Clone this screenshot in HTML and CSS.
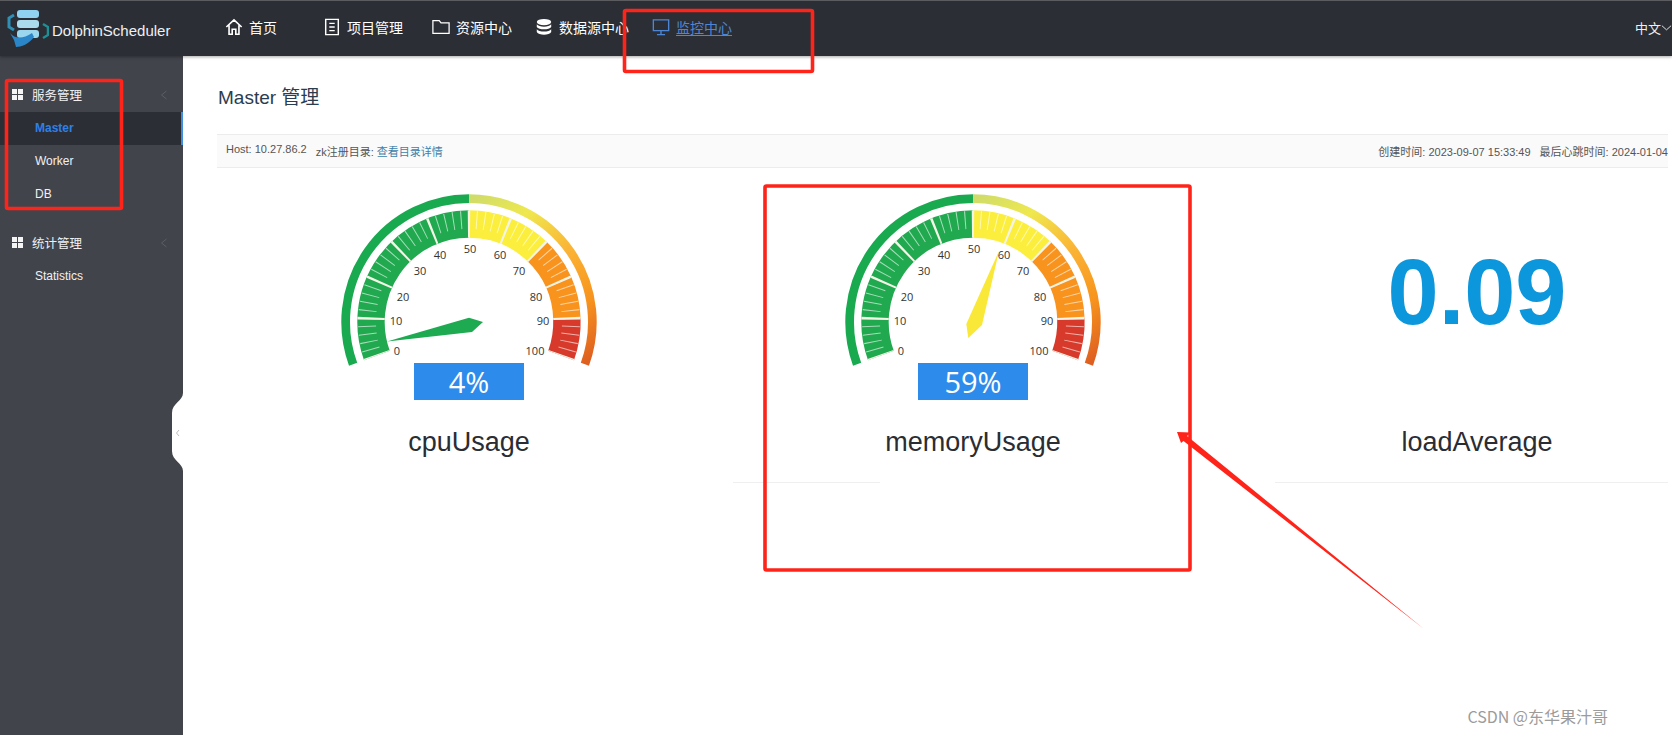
FILE: index.html
```html
<!DOCTYPE html>
<html lang="zh">
<head>
<meta charset="utf-8">
<title>DolphinScheduler</title>
<link rel="stylesheet" href="styles.css">
</head>
<body>
<div class="page">
  <header class="topbar">
    <div class="brand">
      <svg class="logo" viewBox="0 0 42 40" aria-hidden="true">
        <path d="M7 6 L2 9 V18 L7 21" fill="none" stroke="#2f8fb5" stroke-width="3"/>
        <path d="M36 15 L41 18 V26 L36 29" fill="none" stroke="#1f8f96" stroke-width="2.5"/>
        <rect x="10" y="1" width="22" height="8" rx="3" fill="#8fd3f0"/>
        <rect x="10" y="11" width="22" height="8" rx="3" fill="#a9dcec"/>
        <rect x="10" y="21" width="22" height="8" rx="3" fill="#9ad6ee"/>
        <path d="M3 24 C8 30 16 30 25 24 L27 28 C22 35 14 38 9 38 L7 31 Z" fill="#2b86c9"/>
      </svg>
      <span class="brand-name">DolphinScheduler</span>
    </div>
    <nav class="nav">
      <a class="nav-item">
        <svg class="nav-icon" viewBox="0 0 20 20" aria-hidden="true"><path d="M1.5 10 L10 2 L18.5 10 M4.5 8 V18 H8 V12.5 H12 V18 H15.5 V8" fill="none" stroke="currentColor" stroke-width="1.8"/></svg>
        <span>首页</span>
      </a>
      <a class="nav-item">
        <svg class="nav-icon" viewBox="0 0 20 20" aria-hidden="true"><path d="M3 1.5 H17 V18.5 H3 Z M7 6 H13 M7 10 H13 M7 14 H13" fill="none" stroke="currentColor" stroke-width="1.6"/></svg>
        <span>项目管理</span>
      </a>
      <a class="nav-item">
        <svg class="nav-icon" viewBox="0 0 20 20" aria-hidden="true"><path d="M1 3 H8 L10 5.5 H19 V17 H1 Z" fill="none" stroke="currentColor" stroke-width="1.4"/></svg>
        <span>资源中心</span>
      </a>
      <a class="nav-item">
        <svg class="nav-icon" viewBox="0 0 20 20" aria-hidden="true"><ellipse cx="10" cy="4.5" rx="8" ry="3.5" fill="currentColor"/><path d="M2 7 C4 10.5 16 10.5 18 7 V10 C16 13.5 4 13.5 2 10 Z" fill="currentColor"/><path d="M2 12.5 C4 16 16 16 18 12.5 V15.5 C16 19.5 4 19.5 2 15.5 Z" fill="currentColor"/></svg>
        <span>数据源中心</span>
      </a>
      <a class="nav-item nav-item-active">
        <svg class="nav-icon" viewBox="0 0 20 20" aria-hidden="true"><path d="M1.5 2 H18.5 V14 H1.5 Z M10 14 V18 M5.5 18.5 H14.5" fill="none" stroke="currentColor" stroke-width="1.5"/></svg>
        <span class="nav-link">监控中心</span>
      </a>
    </nav>
    <div class="lang">
      <span>中文</span>
      <svg class="lang-arrow" viewBox="0 0 12 8" aria-hidden="true"><path d="M1 1.5 L6 6 L11 1.5" fill="none" stroke="currentColor" stroke-width="1"/></svg>
    </div>
  </header>

  <div class="shell">
    <aside class="sidebar">
      <div class="side-group">
        <div class="side-head">
          <span class="grid-icon"><i></i><i></i><i></i><i></i></span>
          <span class="side-title">服务管理</span>
          <svg class="side-arrow" viewBox="0 0 8 10" aria-hidden="true"><path d="M6.5 1 L1.5 5 L6.5 9" fill="none" stroke="currentColor"/></svg>
        </div>
        <div class="side-item side-item-active">Master</div>
        <div class="side-item">Worker</div>
        <div class="side-item">DB</div>
      </div>
      <div class="side-group">
        <div class="side-head">
          <span class="grid-icon"><i></i><i></i><i></i><i></i></span>
          <span class="side-title">统计管理</span>
          <svg class="side-arrow" viewBox="0 0 8 10" aria-hidden="true"><path d="M6.5 1 L1.5 5 L6.5 9" fill="none" stroke="currentColor"/></svg>
        </div>
        <div class="side-item">Statistics</div>
      </div>
    </aside>

    <main class="content">
      <h1 class="page-title">Master 管理</h1>
      <div class="info-bar">
        <div class="info-left">
          <span>Host: 10.27.86.2</span>
          <span>zk注册目录: <a class="info-link">查看目录详情</a></span>
        </div>
        <div class="info-right">
          <span>创建时间: 2023-09-07 15:33:49</span>
          <span>最后心跳时间: 2024-01-04</span>
        </div>
      </div>

      <div class="cards">
        <section class="card">
          <svg class="gauge" viewBox="-140 -140 280 220" role="img" aria-label="cpuUsage 4%">
            <defs>
              <linearGradient id="rim" gradientUnits="userSpaceOnUse" x1="0" y1="-123" x2="116" y2="42">
                <stop offset="0" stop-color="#cfdc6a"/>
                <stop offset=".22" stop-color="#efe84e"/>
                <stop offset=".48" stop-color="#fbb536"/>
                <stop offset=".75" stop-color="#f7941d"/>
                <stop offset="1" stop-color="#de5f20"/>
              </linearGradient>
              <g id="dial">
                <path class="rim" stroke="#19aa50" d="M-115.9 42.2 A123.3 123.3 0 0 1 0 -123.3"/>
                <path class="rim" stroke="url(#rim)" d="M0 -123.3 A123.3 123.3 0 0 1 115.9 42.2"/>
                <path class="band" stroke="#21a94f" d="M-92.1 33.5 A98 98 0 0 1 0 -98"/>
                <path class="band" stroke="#fcee3c" d="M0 -98 A98 98 0 0 1 68.1 -70.5"/>
                <path class="band" stroke="#f8931e" d="M68.1 -70.5 A98 98 0 0 1 97.9 -3.4"/>
                <path class="band" stroke="#d73a2a" d="M97.9 -3.4 A98 98 0 0 1 92.1 33.5"/>
                <path class="ticks-minor" pathLength="100" d="M-95.8 34.9 A102 102 0 1 1 95.8 34.9"/>
                <path class="ticks-major" pathLength="100" d="M-92.1 33.5 A98 98 0 1 1 92.1 33.5"/>
              </g>
            </defs>
            <use href="#dial"/>
            <g class="scale">
              <text x="-72" y="33">0</text><text x="-73" y="3">10</text><text x="-66" y="-21">20</text><text x="-49" y="-47">30</text><text x="-29" y="-63">40</text><text x="1" y="-69">50</text><text x="31" y="-63">60</text><text x="50" y="-47">70</text><text x="67" y="-21">80</text><text x="74" y="3">90</text><text x="66" y="33">100</text>
            </g>
            <polygon class="needle-green" points="-82,19.5 0,-4.3 14,0 3,10"/>
            <rect class="readout" x="-55" y="41" width="110" height="37"/>
            <text class="readout-text" x="0" y="71">4%</text>
          </svg>
          <div class="metric-name">cpuUsage</div>
        </section>

        <section class="card">
          <svg class="gauge" viewBox="-140 -140 280 220" role="img" aria-label="memoryUsage 59%">
            <use href="#dial"/>
            <g class="scale">
              <text x="-72" y="33">0</text><text x="-73" y="3">10</text><text x="-66" y="-21">20</text><text x="-49" y="-47">30</text><text x="-29" y="-63">40</text><text x="1" y="-69">50</text><text x="31" y="-63">60</text><text x="50" y="-47">70</text><text x="67" y="-21">80</text><text x="74" y="3">90</text><text x="66" y="33">100</text>
            </g>
            <polygon class="needle-yellow" points="26,-71 9,3 -4.7,16 -6.7,2"/>
            <rect class="readout" x="-55" y="41" width="110" height="37"/>
            <text class="readout-text" x="0" y="71">59%</text>
          </svg>
          <div class="metric-name">memoryUsage</div>
        </section>

        <section class="card">
          <div class="load-value">0.09</div>
          <div class="metric-name">loadAverage</div>
        </section>
      </div>

      <div class="rules">
        <div class="rule rule-mid"></div>
        <div class="rule rule-end"></div>
      </div>
    </main>
  </div>

  <div class="collapse-tab">
    <svg class="collapse-shape" viewBox="0 0 12 78" aria-hidden="true">
      <path d="M12 0 C12 8 1 10 1 20 V58 C1 68 12 70 12 78 Z" fill="#fff"/>
      <path d="M8 37 L5.5 40 L8 43" fill="none" stroke="#bdbdc2"/>
    </svg>
  </div>

  <svg class="marks" viewBox="0 0 1672 735" aria-hidden="true">
    <rect class="mark-box" x="624.5" y="10.5" width="188" height="61" rx="1.5"/>
    <rect class="mark-box" x="6.5" y="80.5" width="115" height="128" rx="1.5"/>
    <rect class="mark-box" x="765" y="186" width="425" height="384" rx="1.5" transform="translate(0 0)"/>
    <polygon class="mark-arrow" points="1177,432 1191,432.5 1187,436 1424,629 1183.5,441 1181,443"/>
  </svg>

  <div class="watermark">CSDN @东华果汁哥</div>
</div>
</body>
</html>
```

FILE: styles.css
```css
* {
  box-sizing: border-box;
}

html,
body {
  margin: 0;
  padding: 0;
  background: #fff;
}

.page {
  position: relative;
  width: 1672px;
  height: 735px;
  overflow: hidden;
  display: flex;
  flex-direction: column;
  font-family: "Liberation Sans", "Noto Sans CJK SC", sans-serif;
}

/* top bar */
.topbar {
  flex: none;
  height: 56px;
  display: flex;
  align-items: center;
  background: #2b2e35;
  border-top: 1px solid #5a5c60;
  box-shadow: 0 1px 3px rgba(0, 0, 0, .35);
  position: relative;
  z-index: 2;
  color: #fff;
}

.brand {
  flex: none;
  width: 225px;
  display: flex;
  align-items: center;
  padding-left: 7px;
}

.logo {
  width: 42px;
  height: 40px;
  flex: none;
}

.brand-name {
  margin-left: 3px;
  margin-top: 4px;
  font-size: 15px;
  color: #eef0f2;
}

.nav {
  flex: 1;
  display: grid;
  grid-template-columns: 98px 109px 103px 117px auto;
  margin-top: -3px;
  font-size: 14px;
}

.nav-item {
  display: flex;
  align-items: center;
  gap: 6px;
  color: #fff;
}

.nav-icon {
  width: 18px;
  height: 18px;
  flex: none;
}

.nav-item-active {
  color: #4e86d6;
}

.nav-link {
  text-decoration: underline;
  text-underline-offset: 2px;
}

.lang {
  flex: none;
  width: 37px;
  display: flex;
  align-items: center;
  margin-top: -2px;
  font-size: 13px;
  color: #f0f0f0;
}

.lang-arrow {
  width: 11px;
  height: 8px;
  flex: none;
}

/* sidebar */
.shell {
  flex: 1;
  min-height: 0;
  display: flex;
}

.sidebar {
  flex: none;
  width: 183px;
  background: #42444c;
  color: #f1f1f3;
  padding-top: 21px;
}

.side-group {
  margin-bottom: 14px;
}

.side-head {
  height: 35px;
  display: flex;
  align-items: center;
  padding-left: 12px;
  font-size: 12.5px;
}

.grid-icon {
  width: 11px;
  height: 11px;
  display: grid;
  grid-template-columns: 1fr 1fr;
  gap: 1px;
  margin-right: 9px;
}

.grid-icon i {
  background: #f4f4f4;
}

.side-title {
  flex: 1;
}

.side-arrow {
  width: 8px;
  height: 10px;
  margin-right: 15px;
  color: #5c5e66;
}

.side-item {
  height: 33px;
  line-height: 33px;
  padding-left: 35px;
  font-size: 12px;
}

.side-item-active {
  background: #2c2e36;
  border-right: 2px solid #3f8fe0;
  color: #2f80e4;
  font-weight: bold;
}

/* main */
.content {
  flex: 1;
  min-width: 0;
  padding: 26px 4px 0 34px;
  overflow: hidden;
}

.page-title {
  margin: 0 0 20px 1px;
  height: 32px;
  font-size: 19px;
  font-weight: normal;
  line-height: 32px;
  color: #2a3d50;
}

.info-bar {
  height: 34px;
  display: flex;
  align-items: center;
  justify-content: space-between;
  padding-left: 9px;
  background: #fafafa;
  border-top: 1px solid #ececec;
  border-bottom: 1px solid #ececec;
  font-size: 11px;
  color: #555;
}

.info-left,
.info-right {
  display: flex;
  gap: 9px;
}

.info-link {
  color: #3f7fa8;
}

.cards {
  display: grid;
  grid-template-columns: repeat(3, 504px);
}

.card {
  padding-top: 14px;
  display: flex;
  flex-direction: column;
  align-items: center;
}

.gauge {
  display: block;
  width: 280px;
  height: 220px;
}

.rim {
  fill: none;
  stroke-width: 8.7;
}

.band {
  fill: none;
  stroke-width: 27.4;
}

.ticks-minor {
  fill: none;
  stroke: rgba(255, 255, 255, .6);
  stroke-width: 18;
  stroke-dasharray: .26 1.74;
  stroke-dashoffset: .13;
}

.ticks-major {
  fill: none;
  stroke: #f4f4e6;
  stroke-width: 27.4;
  stroke-dasharray: .6 9.4;
  stroke-dashoffset: .3;
}

.scale text {
  font-family: "Open Sans", sans-serif;
  font-size: 11px;
  fill: #333;
  text-anchor: middle;
}

.needle-green {
  fill: #1eaa50;
}

.needle-yellow {
  fill: #f9e838;
}

.readout {
  fill: #2d8bec;
}

.readout-text {
  font-family: "Open Sans", sans-serif;
  font-size: 29px;
  fill: #fff;
  text-anchor: middle;
}

.metric-name {
  margin-top: 20px;
  height: 40px;
  line-height: 40px;
  font-size: 27px;
  color: #2a2d33;
}

.load-value {
  height: 220px;
  padding-top: 53px;
  line-height: 115px;
  font-size: 92px;
  font-weight: bold;
  color: #0c96dc;
}

.rules {
  margin-top: 20px;
  display: flex;
}

.rule {
  height: 1px;
  background: #efeff1;
}

.rule-mid {
  width: 147px;
  margin-left: 516px;
}

.rule-end {
  flex: 1;
  margin-left: 395px;
}

/* overlays */
.collapse-tab {
  position: absolute;
  left: 171px;
  top: 393px;
  width: 12px;
  height: 78px;
  z-index: 3;
}

.collapse-shape {
  display: block;
  width: 12px;
  height: 78px;
}

.marks {
  position: absolute;
  inset: 0;
  width: 1672px;
  height: 735px;
  z-index: 4;
  pointer-events: none;
}

.mark-box {
  fill: none;
  stroke: #ff2419;
  stroke-width: 3.6;
}

.mark-arrow {
  fill: #ff2419;
}

.watermark {
  position: absolute;
  right: 64px;
  bottom: 7px;
  font-family: "Noto Sans CJK SC", sans-serif;
  font-size: 16px;
  line-height: 24px;
  color: #9b9b9b;
  z-index: 4;
}
```
